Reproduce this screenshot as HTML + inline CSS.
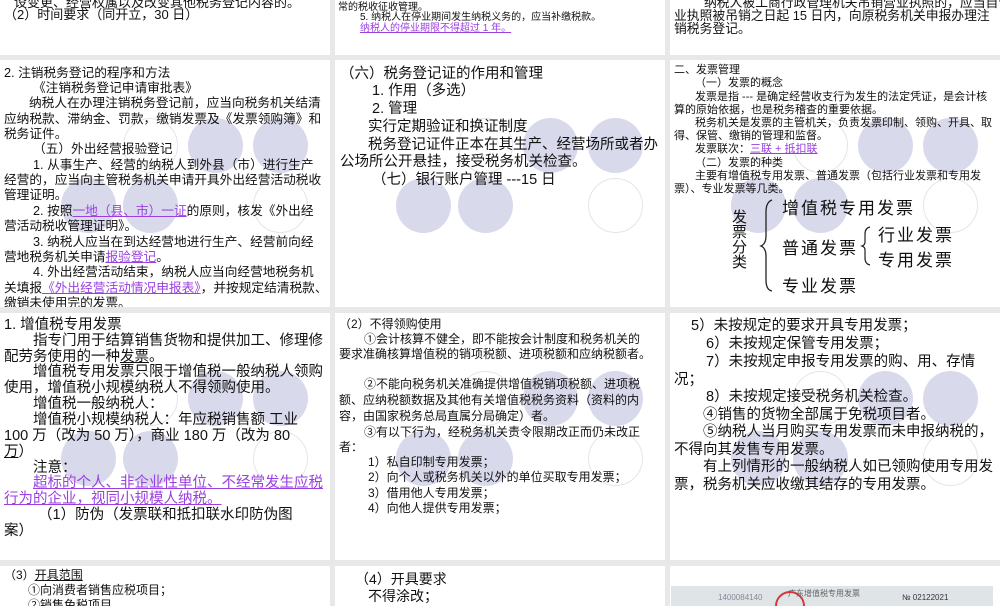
<!DOCTYPE html>
<html><head><meta charset="utf-8">
<style>
*{margin:0;padding:0;box-sizing:border-box}
body{width:1000px;height:600px;background:#e8e8e8;position:relative;overflow:hidden;font-family:"Liberation Sans","Noto Sans CJK SC",sans-serif;color:#111}
.p{position:absolute;background:#fff;overflow:hidden}
.l{position:absolute;white-space:nowrap}
.c{position:absolute;width:55px;height:55px;border-radius:50%}
.f{background:#d9d9ec}
.o{border:1px solid #e4e4ee;background:transparent}
a,.a{color:#9a3fe0;text-decoration:underline}
</style></head><body>

<!-- Row 1 -->
<div class="p" style="left:0;top:0;width:330px;height:55px;font-size:13px">
  <div class="l" style="left:14px;top:-8px">设变更、经营权属以及改变其他税务登记内容的。</div>
  <div class="l" style="left:4px;top:4px">（2）时间要求（同开立，30 日）</div>
</div>
<div class="p" style="left:335px;top:0;width:330px;height:55px;font-size:10px">
  <div class="l" style="left:3px;top:-2px">常的税收征收管理。</div>
  <div class="l" style="left:25px;top:8px">5. 纳税人在停业期间发生纳税义务的，应当补缴税款。</div>
  <div class="l a" style="left:25px;top:19px">纳税人的停业期限不得超过 1 年。</div>
</div>
<div class="p" style="left:670px;top:0;width:330px;height:55px;font-size:12.8px">
  <div class="l" style="left:34px;top:-8px">纳税人被工商行政管理机关吊销营业执照的，应当自营</div>
  <div class="l" style="left:4px;top:5px">业执照被吊销之日起 15 日内，向原税务机关申报办理注</div>
  <div class="l" style="left:4px;top:18px">销税务登记。</div>
</div>

<!-- Row 2 panel 1 -->
<div class="p" style="left:0;top:60px;width:330px;height:247px;font-size:12.7px">
  <div class="c o" style="left:123px;top:58px"></div><div class="c f" style="left:188px;top:58px"></div><div class="c f" style="left:253px;top:58px"></div>
  <div class="c f" style="left:61px;top:118px"></div><div class="c f" style="left:123px;top:118px"></div><div class="c o" style="left:253px;top:118px"></div>
  <div class="l" style="left:4px;top:2px">2. 注销税务登记的程序和方法</div>
  <div class="l" style="left:33px;top:17px">《注销税务登记申请审批表》</div>
  <div class="l" style="left:29px;top:32px">纳税人在办理注销税务登记前，应当向税务机关结清</div>
  <div class="l" style="left:4px;top:48px">应纳税款、滞纳金、罚款，缴销发票及《发票领购簿》和</div>
  <div class="l" style="left:4px;top:63px">税务证件。</div>
  <div class="l" style="left:33px;top:78px">（五）外出经营报验登记</div>
  <div class="l" style="left:33px;top:94px">1. 从事生产、经营的纳税人到外县（市）进行生产</div>
  <div class="l" style="left:4px;top:109px">经营的，应当向主管税务机关申请开具外出经营活动税收</div>
  <div class="l" style="left:4px;top:124px">管理证明。</div>
  <div class="l" style="left:33px;top:140px">2. 按照<span class="a">一地（县、市）一证</span>的原则，核发《外出经</div>
  <div class="l" style="left:4px;top:155px">营活动税收管理证明》。</div>
  <div class="l" style="left:33px;top:171px">3. 纳税人应当在到达经营地进行生产、经营前向经</div>
  <div class="l" style="left:4px;top:186px">营地税务机关申请<span class="a">报验登记</span>。</div>
  <div class="l" style="left:33px;top:201px">4. 外出经营活动结束，纳税人应当向经营地税务机</div>
  <div class="l" style="left:4px;top:217px">关填报<span class="a">《外出经营活动情况申报表》</span>，并按规定结清税款、</div>
  <div class="l" style="left:4px;top:232px">缴销未使用完的发票。</div>
</div>

<!-- Row 2 panel 2 -->
<div class="p" style="left:335px;top:60px;width:330px;height:247px;font-size:14.5px">
  <div class="c o" style="left:123px;top:58px"></div><div class="c f" style="left:188px;top:58px"></div><div class="c f" style="left:253px;top:58px"></div>
  <div class="c f" style="left:61px;top:118px"></div><div class="c f" style="left:123px;top:118px"></div><div class="c o" style="left:253px;top:118px"></div>
  <div class="l" style="left:5px;top:2px">（六）税务登记证的作用和管理</div>
  <div class="l" style="left:37px;top:19px">1. 作用（多选）</div>
  <div class="l" style="left:37px;top:37px">2. 管理</div>
  <div class="l" style="left:33px;top:55px">实行定期验证和换证制度</div>
  <div class="l" style="left:33px;top:73px">税务登记证件正本在其生产、经营场所或者办</div>
  <div class="l" style="left:5px;top:90px">公场所公开悬挂，接受税务机关检查。</div>
  <div class="l" style="left:37px;top:108px">（七）银行账户管理 ---15 日</div>
</div>

<!-- Row 2 panel 3 -->
<div class="p" style="left:670px;top:60px;width:330px;height:247px;font-size:11px">
  <div class="c o" style="left:123px;top:58px"></div><div class="c f" style="left:188px;top:58px"></div><div class="c f" style="left:253px;top:58px"></div>
  <div class="c f" style="left:61px;top:118px"></div><div class="c f" style="left:123px;top:118px"></div><div class="c o" style="left:253px;top:118px"></div>
  <div class="l" style="left:4px;top:1px">二、发票管理</div>
  <div class="l" style="left:25px;top:14px">（一）发票的概念</div>
  <div class="l" style="left:25px;top:28px">发票是指 --- 是确定经营收支行为发生的法定凭证，是会计核</div>
  <div class="l" style="left:4px;top:41px">算的原始依据，也是税务稽查的重要依据。</div>
  <div class="l" style="left:25px;top:54px">税务机关是发票的主管机关，负责发票印制、领购、开具、取</div>
  <div class="l" style="left:4px;top:67px">得、保管、缴销的管理和监督。</div>
  <div class="l" style="left:25px;top:80px">发票联次：<span class="a">三联 + 抵扣联</span></div>
  <div class="l" style="left:25px;top:94px">（二）发票的种类</div>
  <div class="l" style="left:25px;top:107px">主要有增值税专用发票、普通发票（包括行业发票和专用发</div>
  <div class="l" style="left:4px;top:120px">票）、专业发票等几类。</div>
  <div class="l" style="left:62px;top:150px;font-size:15px;line-height:15px;width:16px;white-space:normal">发票分类</div>
  <svg style="position:absolute;left:88px;top:138px" width="20" height="95"><path d="M14 2 Q8 4 8 14 L8 38 Q8 46 3 48 Q8 50 8 58 L8 82 Q8 92 14 93" fill="none" stroke="#222" stroke-width="1.3"/></svg>
  <svg style="position:absolute;left:190px;top:165px" width="14" height="42"><path d="M10 2 Q5 3 5 9 L5 17 Q5 20 2 21 Q5 22 5 25 L5 33 Q5 39 10 40" fill="none" stroke="#222" stroke-width="1.2"/></svg>
  <div class="l" style="left:112px;top:134px;font-size:17px;letter-spacing:2px">增值税专用发票</div>
  <div class="l" style="left:112px;top:174px;font-size:17px;letter-spacing:2px">普通发票</div>
  <div class="l" style="left:208px;top:161px;font-size:17px;letter-spacing:2px">行业发票</div>
  <div class="l" style="left:208px;top:186px;font-size:17px;letter-spacing:2px">专用发票</div>
  <div class="l" style="left:112px;top:212px;font-size:17px;letter-spacing:2px">专业发票</div>
</div>

<!-- Row 3 panel 1 -->
<div class="p" style="left:0;top:313px;width:330px;height:247px;font-size:14.5px">
  <div class="c o" style="left:123px;top:58px"></div><div class="c f" style="left:188px;top:58px"></div><div class="c f" style="left:253px;top:58px"></div>
  <div class="c f" style="left:61px;top:118px"></div><div class="c f" style="left:123px;top:118px"></div><div class="c o" style="left:253px;top:118px"></div>
  <div class="l" style="left:4px;top:0px">1. 增值税专用发票</div>
  <div class="l" style="left:33px;top:16px">指专门用于结算销售货物和提供加工、修理修</div>
  <div class="l" style="left:4px;top:32px">配劳务使用的一种<u>发票</u>。</div>
  <div class="l" style="left:33px;top:47px">增值税专用发票只限于增值税一般纳税人领购</div>
  <div class="l" style="left:4px;top:63px">使用，增值税小规模纳税人不得领购使用。</div>
  <div class="l" style="left:33px;top:79px">增值税一般纳税人：</div>
  <div class="l" style="left:33px;top:95px">增值税小规模纳税人：年应税销售额 工业</div>
  <div class="l" style="left:4px;top:111px">100 万（改为 50 万），商业 180 万（改为 80</div>
  <div class="l" style="left:4px;top:127px"><u>万</u>）</div>
  <div class="l" style="left:33px;top:143px">注意：</div>
  <div class="l a" style="left:33px;top:158px">超标的个人、非企业性单位、不经常发生应税</div>
  <div class="l a" style="left:4px;top:174px">行为的企业，视同小规模人纳税。</div>
  <div class="l" style="left:38px;top:190px">（1）防伪（发票联和抵扣联水印防伪图</div>
  <div class="l" style="left:4px;top:206px">案）</div>
</div>

<!-- Row 3 panel 2 -->
<div class="p" style="left:335px;top:313px;width:330px;height:247px;font-size:12px">
  <div class="c o" style="left:123px;top:58px"></div><div class="c f" style="left:188px;top:58px"></div><div class="c f" style="left:253px;top:58px"></div>
  <div class="c f" style="left:61px;top:118px"></div><div class="c f" style="left:123px;top:118px"></div><div class="c o" style="left:253px;top:118px"></div>
  <div class="l" style="left:4px;top:2px">（2）不得领购使用</div>
  <div class="l" style="left:29px;top:17px">①会计核算不健全，即不能按会计制度和税务机关的</div>
  <div class="l" style="left:4px;top:32px">要求准确核算增值税的销项税额、进项税额和应纳税额者。</div>
  <div class="l" style="left:29px;top:62px">②不能向税务机关准确提供增值税销项税额、进项税</div>
  <div class="l" style="left:4px;top:78px">额、应纳税额数据及其他有关增值税税务资料（资料的内</div>
  <div class="l" style="left:4px;top:94px">容，由国家税务总局直属分局确定）者。</div>
  <div class="l" style="left:29px;top:110px">③有以下行为，经税务机关责令限期改正而仍未改正</div>
  <div class="l" style="left:4px;top:125px">者：</div>
  <div class="l" style="left:33px;top:140px">1）私自印制专用发票；</div>
  <div class="l" style="left:33px;top:155px">2）向个人或税务机关以外的单位买取专用发票；</div>
  <div class="l" style="left:33px;top:171px">3）借用他人专用发票；</div>
  <div class="l" style="left:33px;top:186px">4）向他人提供专用发票；</div>
</div>

<!-- Row 3 panel 3 -->
<div class="p" style="left:670px;top:313px;width:330px;height:247px;font-size:14.5px">
  <div class="c o" style="left:123px;top:58px"></div><div class="c f" style="left:188px;top:58px"></div><div class="c f" style="left:253px;top:58px"></div>
  <div class="c f" style="left:61px;top:118px"></div><div class="c f" style="left:123px;top:118px"></div><div class="c o" style="left:253px;top:118px"></div>
  <div class="l" style="left:21px;top:1px">5）未按规定的要求开具专用发票；</div>
  <div class="l" style="left:36px;top:19px">6）未按规定保管专用发票；</div>
  <div class="l" style="left:36px;top:37px">7）未按规定申报专用发票的购、用、存情</div>
  <div class="l" style="left:4px;top:55px">况；</div>
  <div class="l" style="left:36px;top:72px">8）未按规定接受税务机关检查。</div>
  <div class="l" style="left:33px;top:90px">④销售的货物全部属于免税项目者。</div>
  <div class="l" style="left:33px;top:107px">⑤纳税人当月购买专用发票而未申报纳税的，</div>
  <div class="l" style="left:4px;top:125px">不得向其发售专用发票。</div>
  <div class="l" style="left:33px;top:142px">有上列情形的一般纳税人如已领购使用专用发</div>
  <div class="l" style="left:4px;top:160px">票，税务机关应收缴其结存的专用发票。</div>
</div>

<!-- Row 4 -->
<div class="p" style="left:0;top:566px;width:330px;height:40px;font-size:12px">
  <div class="l" style="left:4px;top:0px">（3）<u>开具范围</u></div>
  <div class="l" style="left:28px;top:15px">①向消费者销售应税项目；</div>
  <div class="l" style="left:28px;top:30px">②销售免税项目</div>
</div>
<div class="p" style="left:335px;top:566px;width:330px;height:40px;font-size:14px">
  <div class="l" style="left:20px;top:3px">（4）开具要求</div>
  <div class="l" style="left:33px;top:20px">不得涂改；</div>
</div>
<div class="p" style="left:670px;top:566px;width:330px;height:40px">
  <div style="position:absolute;left:1px;top:20px;width:322px;height:20px;background:#dfe4e6"></div>
  <div style="position:absolute;left:105px;top:25px;width:30px;height:30px;border:2px solid #d23a3a;border-radius:50%"></div>
  <div class="l" style="left:48px;top:27px;font-size:8px;color:#889">1400084140</div>
  <div class="l" style="left:118px;top:22px;font-size:8px;color:#666">广东增值税专用发票</div>
  <div class="l" style="left:232px;top:27px;font-size:8px;color:#334">№ 02122021</div>
</div>
</body></html>
